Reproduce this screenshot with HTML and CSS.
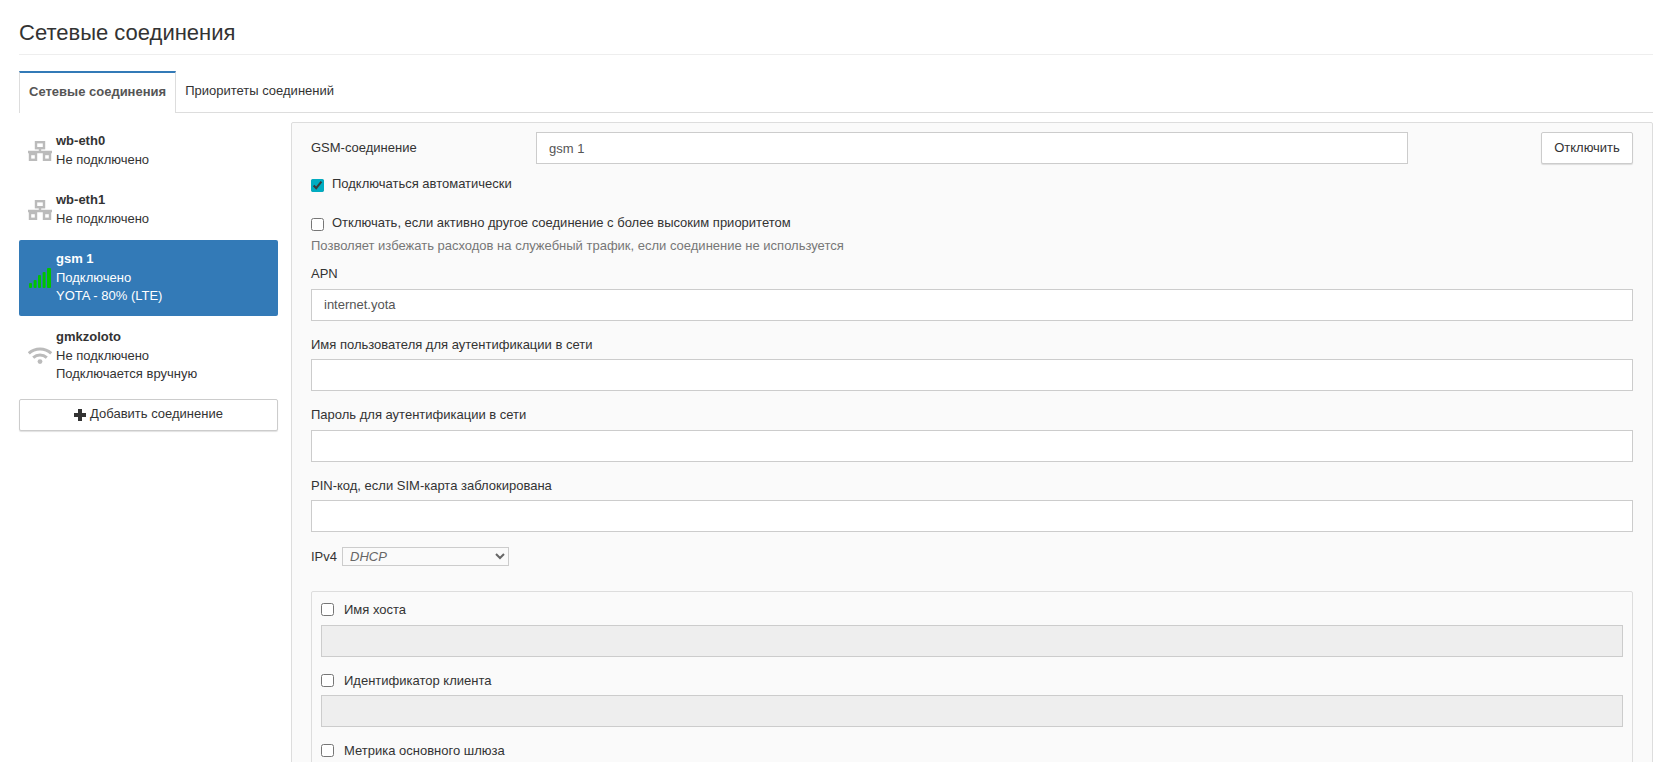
FILE: index.html
```html
<!DOCTYPE html>
<html lang="ru">
<head>
<meta charset="utf-8">
<title>Сетевые соединения</title>
<link rel="stylesheet" href="styles.css">
</head>
<body>
<h1 class="page-title">Сетевые соединения</h1>
<ul class="tabs">
  <li class="tab tab-active">Сетевые соединения</li>
  <li class="tab">Приоритеты соединений</li>
</ul>
<div class="layout">
  <aside class="sidebar">
    <ul class="conn-list">
      <li class="conn">
        <svg class="conn-icon" width="24" height="20" viewBox="0 0 24 20" fill="none" stroke="#bbb" stroke-width="2.4"><rect x="8" y="1.2" width="8" height="6"/><path d="M12 7v4M0 11h24" /><rect x="2" y="13" width="6" height="5.8"/><rect x="16" y="13" width="6" height="5.8"/><path d="M5 11v2M19 11v2"/></svg>
        <div><div class="conn-name">wb-eth0</div><div>Не подключено</div></div>
      </li>
      <li class="conn">
        <svg class="conn-icon" width="24" height="20" viewBox="0 0 24 20" fill="none" stroke="#bbb" stroke-width="2.4"><rect x="8" y="1.2" width="8" height="6"/><path d="M12 7v4M0 11h24" /><rect x="2" y="13" width="6" height="5.8"/><rect x="16" y="13" width="6" height="5.8"/><path d="M5 11v2M19 11v2"/></svg>
        <div><div class="conn-name">wb-eth1</div><div>Не подключено</div></div>
      </li>
      <li class="conn conn-active">
        <svg class="conn-icon" width="24" height="20" viewBox="0 0 24 20" fill="#00c400"><rect x="1" y="15" width="3" height="5" rx="1"/><rect x="5.6" y="12" width="3" height="8" rx="1"/><rect x="10" y="7" width="3" height="13" rx="1"/><rect x="14.6" y="4" width="3" height="16" rx="1"/><rect x="19" y="0" width="4" height="20" rx="1"/></svg>
        <div><div class="conn-name">gsm 1</div><div>Подключено</div><div>YOTA - 80% (LTE)</div></div>
      </li>
      <li class="conn">
        <svg class="conn-icon" width="24" height="17" viewBox="0 0 24 17" fill="none" stroke="#bbb" stroke-width="3"><path d="M.8 6.4C7 .6 17 .6 23.2 6.4"/><path d="M5.2 10.6c4-3.6 9.6-3.6 13.6 0"/><circle cx="12" cy="14.6" r="2.4" fill="#bbb" stroke="none"/></svg>
        <div><div class="conn-name">gmkzoloto</div><div>Не подключено</div><div>Подключается вручную</div></div>
      </li>
    </ul>
    <button class="btn btn-add" type="button">
      <svg class="plus" width="12" height="12" viewBox="0 0 12 12" fill="#333"><path d="M4 0h4v4h4v4H8v4H4V8H0V4h4z"/></svg>Добавить соединение
    </button>
  </aside>
  <main class="panel">
    <div class="head-row">
      <label class="head-label">GSM-соединение</label>
      <input class="input head-input" type="text" value="gsm 1">
      <button class="btn btn-off" type="button">Отключить</button>
    </div>
    <label class="check check-auto"><input class="cb" type="checkbox" checked>Подключаться автоматически</label>
    <label class="check check-off"><input class="cb" type="checkbox">Отключать, если активно другое соединение с более высоким приоритетом</label>
    <p class="hint">Позволяет избежать расходов на служебный трафик, если соединение не используется</p>
    <div class="group"><label class="field-label">APN</label><input class="input" type="text" value="internet.yota"></div>
    <div class="group"><label class="field-label">Имя пользователя для аутентификации в сети</label><input class="input" type="text"></div>
    <div class="group"><label class="field-label">Пароль для аутентификации в сети</label><input class="input" type="password"></div>
    <div class="group"><label class="field-label">PIN-код, если SIM-карта заблокирована</label><input class="input" type="text"></div>
    <div class="ipv4"><label class="ipv4-label">IPv4</label><select class="select"><option>DHCP</option></select></div>
    <fieldset class="options">
      <div class="group"><label class="opt-label"><input class="cb" type="checkbox">Имя хоста</label><input class="input" type="text" disabled></div>
      <div class="group"><label class="opt-label"><input class="cb" type="checkbox">Идентификатор клиента</label><input class="input" type="text" disabled></div>
      <div class="group"><label class="opt-label"><input class="cb" type="checkbox">Метрика основного шлюза</label><input class="input" type="text" disabled></div>
    </fieldset>
  </main>
</div>
</body>
</html>
```
FILE: styles.css
```css
* { box-sizing: border-box; }
html { overflow: hidden; }
body {
  margin: 0;
  padding: 0 18px 0 19px;
  font-family: "Liberation Sans", Arial, sans-serif;
  font-size: 13px;
  line-height: 18.57px;
  color: #333;
  background: #fff;
}
.page-title {
  margin: 0;
  padding: 19px 0 7px;
  height: 55px;
  font-size: 22px;
  line-height: 28px;
  font-weight: 400;
  border-bottom: 1px solid #eee;
}
.tabs {
  display: flex;
  margin: 16px 0 0;
  padding: 0;
  list-style: none;
  height: 42px;
  border-bottom: 1px solid #ddd;
}
.tab {
  height: 41px;
  padding: 10px 9px;
  line-height: 20px;
}
.tab-active {
  height: 42px;
  padding: 9px 9px 0;
  border: 1px solid #ddd;
  border-top: 2px solid #337ab7;
  border-bottom: 0;
  background: #fff;
  font-weight: 700;
  color: #555;
}
.layout {
  display: flex;
  gap: 13px;
  margin-top: 9px;
  align-items: flex-start;
}
.sidebar { flex: 0 0 259px; }
.conn-list { list-style: none; margin: 0; padding: 0; }
.conn {
  display: flex;
  align-items: center;
  gap: 4px;
  padding: 10px 9px;
  margin-bottom: 2px;
  border-radius: 2px;
}
.conn-active { background: #337ab7; color: #fff; }
.conn-icon { flex: none; }
.conn-name { font-weight: 700; }
.btn {
  font: inherit;
  color: #333;
  background: #fff;
  border: 1px solid #ccc;
  border-radius: 2px;
  box-shadow: 0 1px 1px rgba(0,0,0,.12);
  cursor: pointer;
}
.btn-add {
  display: flex;
  align-items: center;
  justify-content: center;
  width: 100%;
  height: 32px;
  margin-top: 5px;
  padding: 0;
}
.plus { margin-right: 4px; }
.panel {
  flex: 1;
  min-width: 0;
  height: 1000px;
  padding: 9px 19px;
  background: #fafafa;
  border: 1px solid #ddd;
  border-radius: 2px;
}
.head-row { display: flex; align-items: flex-start; }
.head-label { flex: 0 0 225px; line-height: 32px; }
.head-input { flex: 0 0 872px; width: auto; }
.btn-off { margin-left: auto; width: 92px; height: 32px; padding: 0; }
.input {
  display: block;
  width: 100%;
  height: 32px;
  padding: 6px 12px;
  font: inherit;
  color: #555;
  background: #fff;
  border: 1px solid #ccc;
  border-radius: 0;
  outline: 0;
}
.input:disabled { background: #eee; }
.check { display: flex; align-items: flex-start; }
.check .cb { margin: 4px 8px 0 0; }
.check-auto { margin-top: 11px; }
.check-off { margin-top: 20px; }
.cb {
  flex: none;
  width: 13px;
  height: 13px;
  accent-color: #00acc1;
}
.hint { margin: 5px 0 0; color: #777; }
.group { margin-bottom: 15px; }
.hint + .group { margin-top: 9.4px; }
.field-label { display: block; margin-bottom: 5px; }
.ipv4 { display: flex; align-items: center; height: 19px; }
.ipv4-label { margin-right: 5px; }
.select {
  width: 167px;
  height: 19px;
  padding: 0 0 0 3px;
  font: italic 13px "Liberation Sans", Arial, sans-serif;
  color: #666;
  background: #fafafa;
  border: 1px solid #ccc;
  border-radius: 0;
}
.options {
  margin: 25px 0 0;
  padding: 9px 9px 0;
  min-width: 0;
  background: #fafafa;
  border: 1px solid #ddd;
  border-radius: 2px;
}
.opt-label { display: flex; align-items: flex-start; margin-bottom: 5px; }
.opt-label .cb { margin: 2px 10px 0 0; }
```
